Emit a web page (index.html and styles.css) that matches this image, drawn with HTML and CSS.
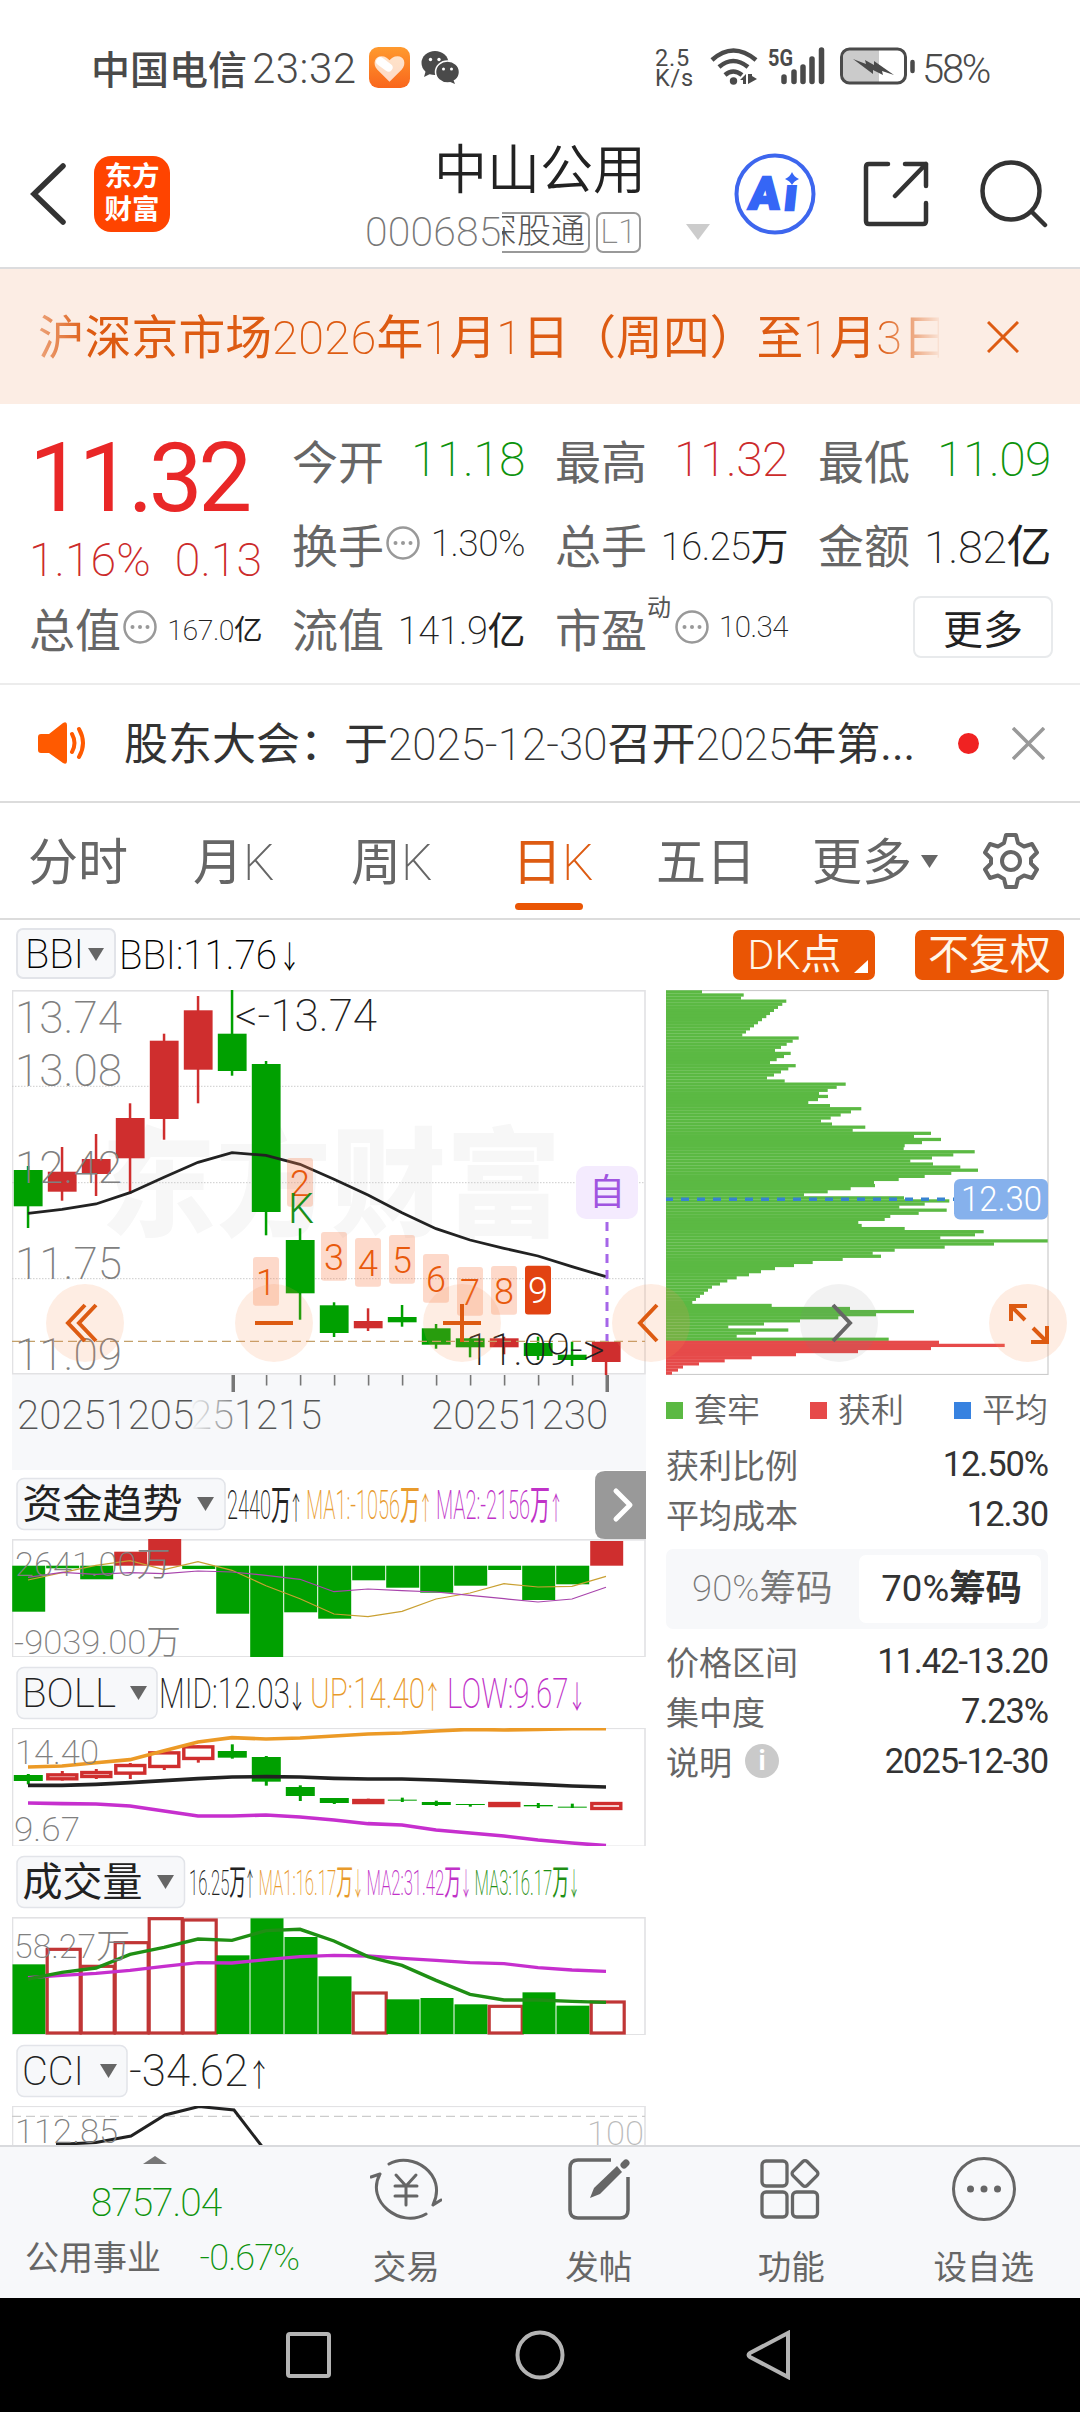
FILE: index.html
```html
<!DOCTYPE html>
<html lang="zh-CN">
<head>
    <meta charset="UTF-8">
    <meta name="viewport" content="width=device-width, initial-scale=1.0">
    <title>中山公用 000685</title>
    <link rel="stylesheet" href="styles.css">
</head>
<body>
    <div class="status-bar">
        <span class="carrier">中国电信</span>
        <span class="clock">23:32</span>
        <svg class="heart-app" viewBox="0 0 40 40">
            <defs>
                <linearGradient id="og" x1="0" y1="0" x2="0" y2="1"><stop offset="0" stop-color="#ff9a2e"/><stop offset="1" stop-color="#f9661c"/></linearGradient>
            </defs>
            <rect width="40" height="40" rx="9" fill="url(#og)"/>
            <path d="M20 34L8 22C3 16 6 9 12 9c4 0 6 2 8 4 2-2 4-4 8-4 6 0 9 7 4 13z" fill="#fff" opacity=".75"/>
            <path d="M11 14l8 6" stroke="#fff" stroke-width="8" stroke-linecap="round"/>
        </svg>
        <svg class="wechat" viewBox="0 0 38 33">
            <ellipse cx="14" cy="12" rx="13.5" ry="12" fill="#4a4a4a"/>
            <path d="M5 19l-2 7 8-4z" fill="#4a4a4a"/>
            <ellipse cx="26.500" cy="21" rx="12" ry="11" fill="#4a4a4a" stroke="#fff" stroke-width="1.500"/>
            <path d="M32 28l2 5-7-3z" fill="#4a4a4a"/>
            <g fill="#fff"><circle cx="9.500" cy="8.500" r="1.700"/><circle cx="18" cy="8.500" r="1.700"/><circle cx="22.500" cy="18" r="1.500"/><circle cx="30.500" cy="18" r="1.500"/></g>
        </svg>
        <div class="net-speed">2.5<br>K/s</div>
        <svg class="signals" viewBox="0 0 206 40">
            <g fill="none" stroke="#4a4a4a" stroke-width="4.500">
                <path d="M2 13Q23-6 46 13"/>
                <path d="M9 20Q23 8 38 20"/>
                <path d="M15 28Q23 21 32 28"/>
            </g>
            <circle cx="23.500" cy="34" r="3.700" fill="#4a4a4a"/>
            <path d="M30 33l6-6v10h-3v-4zM38 27v10l9-5-5-3v-2z" fill="#4a4a4a"/>
            <text x="58" y="18.500" class="five-g" textLength="25" lengthAdjust="spacingAndGlyphs">5G</text>
            <g stroke="#4a4a4a" stroke-width="5.500" stroke-linecap="round">
                <path d="M74 30v4.500M84 25v9.500M93 20v14.500M102 12v22.500M111.500 3v31.500"/>
            </g>
            <path d="M141 3h28v32h-28q-8 0-8-8V11q0-8 8-8z" fill="#cbcbcb"/>
            <rect x="131.500" y="2" width="64" height="34" rx="8" fill="none" stroke="#4a4a4a" stroke-width="3"/>
            <path d="M143 12l13 5-1-4 9 5v-4l20 14-12-4 1 4-10-5v4z" fill="#4a4a4a"/>
            <path d="M202.500 15v9" stroke="#4a4a4a" stroke-width="4.500" stroke-linecap="round"/>
        </svg>
        <span class="battery">58%</span>
    </div>

    <div class="header">
        <svg class="back" viewBox="0 0 36 62"><path d="M33 3L4 31l29 28" fill="none" stroke="#333" stroke-width="5.500" stroke-linecap="round"/></svg>
        <div class="app-logo">东方<br>财富</div>
        <div class="stock">
            <div class="stock-name">中山公用</div>
            <div class="stock-code">
                <span>000685</span>
                <span class="tag tag-clip"><i>深股通</i></span>
                <span class="tag tag-level">L1</span>
            </div>
        </div>
        <svg class="drop" viewBox="0 0 24 16"><path d="M0 0h24L12 16z" fill="#ccc"/></svg>
        <svg class="ai" viewBox="0 0 82 82">
            <circle cx="41" cy="41" r="38.500" fill="none" stroke="#3d66ee" stroke-width="4"/>
            <g transform="skewX(-6)">
                <text x="20" y="56" class="ai-text">A</text>
                <text x="55" y="57" class="ai-text">ı</text>
            </g>
            <path d="M58 19q2 5 7 7-5 2-7 6-2-4-7-6 5-2 7-7z" fill="#3566f6"/>
        </svg>
        <svg class="share" viewBox="0 0 66 66"><path d="M25 3H6q-3 0-3 3v54q0 3 3 3h54q3 0 3-3V42M42 3h21v22M63 3L32 35" fill="none" stroke="#333" stroke-width="4.500" stroke-linecap="round" stroke-linejoin="round"/></svg>
        <svg class="search" viewBox="0 0 68 68"><circle cx="31" cy="31" r="28.500" fill="none" stroke="#333" stroke-width="4.500"/><path d="M52 52l13 13" stroke="#333" stroke-width="4.500" stroke-linecap="round"/></svg>
    </div>

    <div class="banner">
        <div class="banner-text">沪深京市场<s>2026</s>年<s>1</s>月<s>1</s>日（周四）至<s>1</s>月<s>3</s>日</div>
        <svg class="banner-close" viewBox="0 0 32 32"><path d="M1 1l30 30M31 1L1 31" stroke="#dd5b12" stroke-width="3"/></svg>
    </div>

    <div class="quote">
        <div class="cell price-cell">
            <div class="price">11.32</div>
            <div class="change"><span>1.16%</span><span>0.13</span></div>
        </div>
        <div class="cell"><label>今开</label><b class="down">11.18</b></div>
        <div class="cell"><label>最高</label><b class="up">11.32</b></div>
        <div class="cell"><label>最低</label><b class="down">11.09</b></div>
        <div class="cell"><label>换手</label><svg class="dots" viewBox="0 0 34 34"><use href="#dots"/></svg><b class="s37">1.30%</b></div>
        <div class="cell"><label>总手</label><b class="s38">16.25<u>万</u></b></div>
        <div class="cell"><label>金额</label><b class="s45">1.82<u>亿</u></b></div>
        <div class="cell"><label>总值</label><svg class="dots" viewBox="0 0 34 34"><use href="#dots"/></svg><b class="s29">167.0<u>亿</u></b></div>
        <div class="cell"><label>流值</label><b class="s38">141.9<u>亿</u></b></div>
        <div class="cell"><label>市盈</label><sup>动</sup><svg class="dots" viewBox="0 0 34 34"><use href="#dots"/></svg><b class="s30">10.34</b></div>
        <div class="cell more-cell"><button class="more-btn">更多</button></div>
    </div>

    <div class="news">
        <svg class="speaker" viewBox="0 0 50 42">
            <path d="M3 12h8L25 1q4-2 4 2v36q0 4-4 2L11 31H3q-3 0-3-3V15q0-3 3-3z" fill="#ff5a00"/>
            <path d="M34 12q5 9 0 18M41 7q8 14 0 28" fill="none" stroke="#ff5a00" stroke-width="4" stroke-linecap="round"/>
        </svg>
        <span class="news-text">股东大会：于<s>2025-12-30</s>召开<s>2025</s>年第...</span>
        <i class="red-dot"></i>
        <svg class="news-close" viewBox="0 0 33 33"><path d="M1 1l31 31M32 1L1 32" stroke="#999" stroke-width="3.500"/></svg>
    </div>

    <div class="tabs">
        <div class="tab">分时</div>
        <div class="tab">月<s>K</s></div>
        <div class="tab">周<s>K</s></div>
        <div class="tab active">日<s>K</s></div>
        <div class="tab">五日</div>
        <div class="tab">更多<svg class="tab-arrow" viewBox="0 0 17 13"><path d="M0 0h17L8.500 13z" fill="#666"/></svg></div>
        <svg class="gear" viewBox="0 0 58 58">
            <path d="M24 3h10l2 8 6 3.500 8-2.500 5 8.500-6 6v5l6 6-5 8.500-8-2.500-6 3.500-2 8H24l-2-8-6-3.500-8 2.500-5-8.500 6-6v-5l-6-6 5-8.500 8 2.500 6-3.500z" fill="none" stroke="#666" stroke-width="4" stroke-linejoin="round"/>
            <circle cx="29" cy="29" r="9" fill="none" stroke="#666" stroke-width="4"/>
        </svg>
    </div>

    <div class="charts">
        <div class="chart-head">
            <div class="pill pill-bbi"><svg viewBox="12 928 104 51"><text x="25" y="968" font-size="41" textLength="59" lengthAdjust="spacingAndGlyphs">BBI</text><path d="M88 948h16l-8 13z" fill="#666"/></svg></div>
            <svg class="bbi-value" viewBox="118 928 200 51">
                <text x="119" y="968.500" font-size="41" textLength="158" lengthAdjust="spacingAndGlyphs">BBI:11.76</text>
                <text class="arw" x="289.500" y="968" textLength="22" lengthAdjust="spacingAndGlyphs">↓</text>
            </svg>
            <span class="btn dk"><s>DK</s>点<i></i></span>
            <span class="btn">不复权</span>
        </div>
        <div class="chart-body">
            <div class="left">
                <svg id="kline" class="h385" viewBox="12 990 634 385"></svg>
                <svg id="axis" class="h95" viewBox="12 1375 634 95"></svg>
                <div class="ind-row h69">
                    <svg viewBox="12 1470 634 69">
                        <rect class="pill-box" x="17" y="1478.500" width="208" height="51" rx="7"/>
                        <text class="cjk" x="22.500" y="1518" font-size="40" textLength="160" lengthAdjust="spacingAndGlyphs" fill="#222">资金趋势</text>
                        <path d="M197 1497h17l-8.500 14z" fill="#666"/>
                        <g font-size="40" id="fund-legend"></g>
                        <path d="M646 1471h-41q-10 0-10 10v48q0 10 10 10h41z" fill="#999"/>
                        <path d="M616 1491l14 14-14 14" fill="none" stroke="#fff" stroke-width="5" stroke-linecap="round" stroke-linejoin="round"/>
                    </svg>
                </div>
                <svg id="fund" class="h118" viewBox="12 1539 634 118"></svg>
                <div class="ind-row h71">
                    <svg viewBox="12 1657 634 71">
                        <rect class="pill-box" x="17" y="1667.500" width="140" height="51" rx="7"/>
                        <text x="22" y="1706.500" font-size="41" textLength="94" lengthAdjust="spacingAndGlyphs" fill="#222">BOLL</text>
                        <path d="M130 1686h17l-8.500 14z" fill="#666"/>
                        <g font-size="43" id="boll-legend"></g>
                    </svg>
                </div>
                <svg id="boll" class="h118" viewBox="12 1728 634 118"></svg>
                <div class="ind-row h71">
                    <svg viewBox="12 1846 634 71">
                        <rect class="pill-box" x="17" y="1856.500" width="167.500" height="51" rx="7"/>
                        <text class="cjk" x="22.500" y="1896" font-size="40" textLength="120" lengthAdjust="spacingAndGlyphs" fill="#222">成交量</text>
                        <path d="M157 1875h17l-8.500 14z" fill="#666"/>
                        <g font-size="35" id="volume-legend"></g>
                    </svg>
                </div>
                <svg id="volume" class="h118" viewBox="12 1917 634 118"></svg>
                <div class="ind-row h71">
                    <svg viewBox="12 2035 634 71">
                        <rect class="pill-box" x="17" y="2045.500" width="110" height="51" rx="7"/>
                        <text x="22" y="2084.500" font-size="41" textLength="62" lengthAdjust="spacingAndGlyphs" fill="#222">CCI</text>
                        <path d="M100 2064h17l-8.500 14z" fill="#666"/>
                        <g font-size="44" id="cci-legend"></g>
                    </svg>
                </div>
                <svg id="cci" class="h39" viewBox="12 2106 634 39"></svg>
            </div>
            <div class="right">
                <svg id="chips" class="h385" viewBox="666 990 383 385"></svg>
                <div class="legend">
                    <span><i class="sq green"></i>套牢</span>
                    <span><i class="sq red"></i>获利</span>
                    <span><i class="sq blue"></i>平均</span>
                </div>
                <div class="stat"><label>获利比例</label><span>12.50%</span></div>
                <div class="stat"><label>平均成本</label><span>12.30</span></div>
                <div class="toggle">
                    <div class="opt"><s>90%</s>筹码</div>
                    <div class="opt on"><s>70%</s>筹码</div>
                </div>
                <div class="stat"><label>价格区间</label><span>11.42-13.20</span></div>
                <div class="stat"><label>集中度</label><span>7.23%</span></div>
                <div class="stat"><label>说明<i class="info">i</i></label><span>2025-12-30</span></div>
            </div>
            <!-- 图表上的悬浮操作按钮 -->
            <div class="float-tools">
                <svg viewBox="0 0 78 78"><path d="M39 21L22 39l17 18M50 21L33 39l17 18"/></svg>
                <svg viewBox="0 0 78 78"><path d="M20 39h38"/></svg>
                <svg viewBox="0 0 78 78"><path d="M20 39h38M39 20v38"/></svg>
                <svg viewBox="0 0 78 78"><path d="M45 21L28 39l17 18"/></svg>
                <svg class="grey" viewBox="0 0 78 78"><path d="M33 21l17 18-17 18"/></svg>
                <svg viewBox="0 0 78 78"><path d="M22 37V22h16M23 23l13 13M58 42v16H42M57 57L44 44"/></svg>
            </div>
        </div>
    </div>

    <div class="bottom-bar">
        <div class="index">
            <svg class="up-arrow" viewBox="0 0 24 8"><path d="M0 8L12 0l12 8z" fill="#777"/></svg>
            <div class="index-value">8757.04</div>
            <div class="index-name"><span>公用事业</span><em>-0.67%</em></div>
        </div>
        <div class="action">
            <svg viewBox="0 0 72 66">
                <g fill="none" stroke="#666" stroke-width="3" stroke-linecap="round" stroke-linejoin="round">
                    <path d="M19 8C42-5 78 18 63 49M63 49l8-5M56 58C30 73-5 45 10 18M10 18l-9 3"/>
                    <path d="M26 19l10 11 10-11M25 30h22M25 40h22M36 30v19"/>
                </g>
            </svg>
            <span>交易</span>
        </div>
        <div class="action">
            <svg viewBox="0 0 72 66">
                <path d="M48 4H15q-8 0-8 8v42q0 8 8 8h42q8 0 8-8V21" fill="none" stroke="#666" stroke-width="3.500"/>
                <path d="M27 42l4-10 23-22 5 6-22 22z" fill="#666"/><path d="M61 9l2-2" stroke="#666" stroke-width="7" stroke-linecap="round"/>
            </svg>
            <span>发帖</span>
        </div>
        <div class="action">
            <svg viewBox="0 0 72 66">
                <g fill="none" stroke="#666" stroke-width="3.300">
                    <rect x="7" y="5" width="25" height="25" rx="4"/><rect x="7" y="36" width="25" height="25" rx="4"/><rect x="37.500" y="36" width="25" height="25" rx="4"/>
                    <rect x="40" y="7.500" width="20" height="20" rx="3" transform="rotate(45 50 17.500)"/>
                </g>
            </svg>
            <span>功能</span>
        </div>
        <div class="action">
            <svg viewBox="0 0 72 66"><circle cx="36" cy="33" r="30.500" fill="none" stroke="#666" stroke-width="3"/><g fill="#666"><circle cx="22.500" cy="33" r="3.500"/><circle cx="36" cy="33" r="3.500"/><circle cx="49.500" cy="33" r="3.500"/></g></svg>
            <span>设自选</span>
        </div>
    </div>

    <div class="nav-bar">
        <svg viewBox="0 0 50 50"><rect x="4" y="4" width="41" height="42" rx="2"/></svg>
        <svg viewBox="0 0 50 50"><circle cx="25" cy="25" r="22.500"/></svg>
        <svg viewBox="0 0 50 50"><path d="M42 3v44L4 27q-3-2 0-4z"/></svg>
    </div>

    <svg width="0" height="0" class="defs">
        <symbol id="dots" viewBox="0 0 34 34">
            <circle cx="17" cy="17" r="15.500" fill="none" stroke="#999" stroke-width="2.500"/>
            <g fill="#999"><circle cx="9.500" cy="17" r="2"/><circle cx="17" cy="17" r="2"/><circle cx="24.500" cy="17" r="2"/></g>
        </symbol>
    </svg>

    <script src="charts.js"></script>
</body>
</html>
```

FILE: styles.css
```css
* {
    margin: 0;
    padding: 0;
    box-sizing: border-box;
}

body {
    width: 1080px;
    height: 2412px;
    overflow: hidden;
    display: flex;
    flex-direction: column;
    background-color: #fff;
    color: #222;
    font-family: Roboto, "Noto Sans CJK SC", sans-serif;
    font-weight: 400;
    white-space: nowrap;
}

svg {
    display: block;
    flex: none;
}

i, em {
    font-style: normal;
}

/* s: 细体数字  u: 数字后的单位 */
s {
    text-decoration: none;
    font-weight: 200;
}

u {
    text-decoration: none;
    font-weight: 400;
}

svg text {
    font-weight: 200;
}

svg .cjk {
    font-weight: 400;
}

.arw {
    font-size: 31px;
    text-anchor: middle;
}

.defs {
    position: absolute;
}

/* 状态栏 */
.status-bar {
    height: 120px;
    padding: 14px 0 0 91px;
    display: flex;
    align-items: center;
    color: #4a4a4a;
}

.carrier {
    width: 161px;
    font-size: 39px;
    font-weight: 500;
}

.clock {
    width: 117px;
    font-size: 42px;
    font-weight: 300;
    padding-top: 3px;
    letter-spacing: 0.5px;
}

.heart-app {
    width: 41px;
    height: 41px;
}

.wechat {
    width: 38px;
    height: 33px;
    margin-left: 11px;
}

.net-speed {
    width: 57px;
    margin-left: 196px;
    padding-top: 2px;
    font-size: 23.5px;
    line-height: 20px;
    letter-spacing: 0.8px;
}

.signals {
    width: 206px;
    height: 40px;
    margin-left: -2px;
}

svg .five-g {
    font-size: 24px;
    font-weight: 700;
    fill: #4a4a4a;
}

.battery {
    font-size: 40px;
    font-weight: 300;
    padding-top: 4px;
    margin-left: 6px;
    letter-spacing: -2.3px;
}

/* 标题 */
.header {
    height: 149px;
    display: flex;
    align-items: center;
    padding-left: 30px;
    border-bottom: 2px solid #dcdcde;
}

.back {
    width: 36px;
    height: 62px;
}

.app-logo {
    width: 76px;
    height: 76px;
    margin-left: 28px;
    padding-top: 4px;
    border-radius: 17px;
    background-color: #ff4400;
    color: #fff;
    font-size: 27.5px;
    font-weight: 700;
    line-height: 33px;
    text-align: center;
}

.stock {
    width: 278px;
    margin-left: 195px;
    align-self: flex-start;
    padding-top: 16px;
}

.stock-name {
    text-align: right;
    font-size: 53px;
    font-weight: 350;
    line-height: 70px;
    margin-right: -3px;
}

.stock-code {
    display: flex;
    align-items: center;
    height: 50px;
    margin-top: 1px;
    color: #777;
    font-size: 41px;
    font-weight: 200;
}

.stock-code > span:first-child {
    width: 137px;
    letter-spacing: 0.2px;
}

.tag {
    height: 41px;
    line-height: 35px;
    border: 2px solid #999;
    border-radius: 7px;
    font-size: 34px;
}

.tag-clip {
    width: 88px;
    overflow: hidden;
    display: flex;
    justify-content: flex-end;
    padding-right: 3px;
    border-left: none;
    border-radius: 0 7px 7px 0;
    color: #555;
    font-weight: 300;
}

.tag-level {
    width: 45px;
    margin-left: 6px;
    text-align: center;
    color: #888;
}

.drop {
    width: 24px;
    height: 16px;
    margin: 77px 0 0 43px;
}

.ai {
    width: 82px;
    height: 82px;
    margin-left: 24px;
}

svg .ai-text {
    font-size: 45px;
    font-weight: 900;
    fill: #3566f6;
    stroke: #3566f6;
    stroke-width: 2.5;
}

.share {
    width: 66px;
    height: 66px;
    margin-left: 47px;
}

.search {
    width: 68px;
    height: 68px;
    margin-left: 51px;
}

/* 公告 */
.banner {
    height: 135px;
    padding-left: 38px;
    display: flex;
    align-items: center;
    background-color: #fcede4;
}

.banner-text {
    width: 901px;
    overflow: hidden;
    padding-bottom: 6px;
    font-size: 46.8px;
    color: #dd5b12;
    -webkit-mask-image: linear-gradient(90deg, rgba(0,0,0,0.5), #000 50px, #000 840px, transparent 906px);
    mask-image: linear-gradient(90deg, rgba(0,0,0,0.5), #000 50px, #000 840px, transparent 906px);
}

.banner-text s {
    letter-spacing: 0.4px;
}

.banner-close {
    width: 32px;
    height: 32px;
    margin-left: 48px;
}

/* 行情 */
.quote {
    height: 281px;
    padding: 13px 29px 0 29px;
    display: grid;
    grid-template-columns: repeat(4, 233px);
    grid-template-rows: repeat(3, 84px);
    column-gap: 30px;
    border-bottom: 2px solid #ececec;
}

.cell {
    display: flex;
    align-items: center;
}

.cell label {
    font-size: 46px;
    color: #666;
}

.cell b {
    flex: 1;
    text-align: right;
    font-weight: 200;
    font-size: 48px;
    letter-spacing: -0.5px;
}

.cell sup {
    font-size: 24px;
    color: #555;
    margin-top: -44px;
    margin-right: 2px;
}

.cell .s45 { font-size: 45px; }
.cell .s38 { font-size: 38px; }
.cell .s37 { font-size: 37px; }
.cell .s30 { font-size: 29.5px; }
.cell .s29 { font-size: 28.5px; }

.down { color: #0d930d; }
.up { color: #cc2b2b; }

.dots {
    width: 34px;
    height: 34px;
    margin-left: 2px;
}

.price-cell {
    grid-row: 1 / 3;
    flex-direction: column;
    align-items: flex-start;
}

.price {
    font-size: 96px;
    line-height: 112px;
    margin-top: 5px;
    letter-spacing: -4.5px;
    color: #e92727;
}

.change {
    width: 233px;
    display: flex;
    justify-content: space-between;
    line-height: 52px;
    font-size: 46.5px;
    font-weight: 200;
    color: #cc2b2b;
}

.more-cell {
    justify-content: flex-end;
}

.more-btn {
    width: 140px;
    height: 62px;
    margin-right: -2px;
    padding-bottom: 4px;
    border: 2px solid #e8eaec;
    border-radius: 8px;
    background-color: #fff;
    color: #222;
    font: 400 40px Roboto, "Noto Sans CJK SC", sans-serif;
}

/* 资讯 */
.news {
    height: 118px;
    padding-left: 38px;
    display: flex;
    align-items: center;
    border-bottom: 2px solid #dcdcdc;
}

.speaker {
    width: 50px;
    height: 42px;
}

.news-text {
    width: 834px;
    margin-left: 36px;
    padding-bottom: 5px;
    font-size: 44px;
    color: #333;
}

.red-dot {
    width: 21px;
    height: 21px;
    border-radius: 50%;
    background-color: #f02222;
}

.news-close {
    width: 33px;
    height: 33px;
    margin-left: 33px;
}

/* 周期 */
.tabs {
    height: 117px;
    padding-left: 28px;
    display: grid;
    grid-template-columns: 165px 158px 161px 144px 156px 170px 58px;
    align-items: center;
    border-bottom: 2px solid #dcdcdc;
    font-size: 50px;
    color: #666;
}

.tab {
    height: 115px;
    line-height: 120px;
    position: relative;
}

.tab.active {
    color: #dd5b12;
}

.tab.active::after {
    content: '';
    position: absolute;
    left: 3px;
    bottom: 8px;
    width: 68px;
    height: 7px;
    border-radius: 4px;
    background-color: #ea5504;
}

.tab-arrow {
    display: inline-block;
    width: 17px;
    height: 13px;
    margin: 0 0 12px 9px;
}

.gear {
    width: 58px;
    height: 58px;
}

/* 图表 */
.charts {
    height: 1225px;
    overflow: hidden;
}

.chart-head {
    height: 70px;
    padding: 8px 0 0 16px;
    display: flex;
}

.pill {
    width: 100px;
    height: 51px;
    border: 2px solid #e2e4e9;
    border-radius: 7px;
    background-color: #f7f8fa;
}

.pill svg {
    width: 104px;
    height: 51px;
    margin: -2px 0 0 -6px;
}

.pill-box {
    fill: #f7f8fa;
    stroke: #e2e4e9;
    stroke-width: 1.5;
}

.bbi-value {
    width: 200px;
    height: 51px;
    margin-left: 2px;
}

.btn {
    width: 149px;
    height: 50px;
    margin: 2px 0 0 40px;
    border-radius: 7px;
    background-color: #ea5504;
    color: #fff6e8;
    font-size: 41px;
    line-height: 50px;
    text-align: center;
}

.btn s {
    font-weight: 300;
}

.dk {
    width: 142px;
    margin-left: 415px;
    padding-right: 19px;
    position: relative;
}

.dk i {
    position: absolute;
    right: 7px;
    bottom: 7px;
    border-left: 14px solid transparent;
    border-bottom: 13px solid #fff;
}

.chart-body {
    display: flex;
    padding-left: 12px;
    position: relative;
}

.left {
    width: 634px;
}

.left > svg,
.ind-row svg {
    width: 634px;
    height: 100%;
}

.left .h385, .right .h385 { height: 385px; }
.left .h118 { height: 118px; }
.left .h95 { height: 95px; }
.left .h71 { height: 71px; }
.left .h69 { height: 69px; }
.left .h39 { height: 39px; }

.right {
    width: 383px;
    margin-left: 20px;
}

.right > svg {
    width: 383px;
}

.float-tools {
    position: absolute;
    left: 46px;
    top: 294px;
    width: 1021px;
    display: flex;
    justify-content: space-between;
}

.float-tools svg {
    width: 78px;
    height: 78px;
    border-radius: 50%;
    background-color: rgba(250, 140, 80, 0.16);
    fill: none;
    stroke: #dd5b12;
    stroke-width: 4;
}

.float-tools .grey {
    background-color: rgba(130, 130, 130, 0.1);
    stroke: #666;
}

.legend {
    height: 64px;
    margin-right: 1px;
    padding-top: 2px;
    display: flex;
    justify-content: space-between;
    align-items: center;
    font-size: 33px;
    font-weight: 350;
    color: #666;
}

.legend span {
    display: flex;
    align-items: center;
}

.sq {
    width: 17px;
    height: 17px;
    margin-right: 11px;
    margin-top: 4px;
}

.green { background-color: #5bb943; }
.red { background-color: #e64a4a; }
.blue { background-color: #3782e0; }

.stat {
    height: 50px;
    margin-right: 1px;
    display: flex;
    justify-content: space-between;
    align-items: center;
    font-size: 33px;
    color: #333;
}

.stat label {
    display: flex;
    align-items: center;
    color: #666;
}

.stat span {
    font-size: 34.5px;
    letter-spacing: -1.1px;
}

.info {
    width: 34px;
    height: 34px;
    margin-left: 13px;
    border-radius: 50%;
    background-color: #cacaca;
    color: #fff;
    font-size: 27px;
    font-weight: 700;
    line-height: 34px;
    text-align: center;
}

.toggle {
    width: 382px;
    height: 80px;
    margin: 10px 0 7px;
    padding: 6px 7px;
    display: flex;
    border-radius: 7px;
    background-color: #f7f8fa;
    font-size: 36.5px;
    line-height: 68px;
    text-align: center;
}

.opt {
    flex: 1;
    padding-right: 7px;
    color: #777;
}

.opt.on {
    padding-right: 0;
    padding-left: 4px;
    border-radius: 7px;
    background-color: #fff;
    color: #333;
    font-weight: 700;
}

.opt.on s {
    font-weight: 400;
}

/* 底部 */
.bottom-bar {
    height: 153px;
    display: flex;
    border-top: 2px solid #d9dadd;
    background-color: #f7f8fa;
    color: #666;
}

.index {
    width: 310px;
    padding-top: 9px;
}

.up-arrow {
    width: 24px;
    height: 8px;
    margin-left: 143px;
}

.index-value {
    margin-top: 16px;
    padding-left: 2px;
    text-align: center;
    font-size: 39px;
    font-weight: 200;
    line-height: 46px;
    color: #0d930d;
    letter-spacing: -1px;
}

.index-name {
    padding: 0 11px 0 25px;
    margin-top: 8px;
    display: flex;
    justify-content: space-between;
    align-items: center;
    font-size: 34px;
    line-height: 48px;
}

.index-name em {
    font-size: 36px;
    font-weight: 200;
    color: #0d930d;
    letter-spacing: -0.9px;
}

.action {
    flex: 1;
    padding-top: 9px;
    display: flex;
    flex-direction: column;
    align-items: center;
    font-size: 33.5px;
}

.action svg {
    width: 72px;
    height: 66px;
}

.action span {
    margin-top: 21px;
    line-height: 50px;
}

.nav-bar {
    height: 114px;
    padding: 0 284px;
    display: flex;
    justify-content: space-between;
    align-items: center;
    background-color: #000;
}

.nav-bar svg {
    width: 50px;
    height: 50px;
    fill: none;
    stroke: #b4b4b4;
    stroke-width: 4;
}
```

FILE: charts.js
```js
const RED = '#cf2e2e';
const GREEN = '#00a000';
const ORANGE = '#e89a2b';
const PURPLE = '#c032c8';
const DARK = '#222';
const cx = i => 28 + 34 * i;

function rect(x, y, w, h, attrs) {
    return `<rect x="${x}" y="${y}" width="${w}" height="${h}" ${attrs || ''}/>`;
}

function line(x1, y1, x2, y2, attrs) {
    return `<line x1="${x1}" y1="${y1}" x2="${x2}" y2="${y2}" ${attrs || ''}/>`;
}

function curve(ys, color, width) {
    const pts = ys.map((y, i) => cx(i) + ',' + y).join(' ');
    return `<polyline points="${pts}" fill="none" stroke="${color}" stroke-width="${width}"/>`;
}

function text(x, y, size, len, color, str, attrs) {
    return `<text x="${x}" y="${y}" font-size="${size}" textLength="${len}" lengthAdjust="spacingAndGlyphs" fill="${color}" ${attrs || ''}>${str}</text>`;
}

function frame(top, height) {
    return rect(12.5, top + 0.8, 632.5, height, 'fill="none" stroke="#e2e2e4" stroke-width="1.6"');
}

// 指标数值: [x, 结束x, 颜色, 文本, 箭头, 箭头中心x]
function drawLegend(id, y, arrowWidth, items) {
    document.getElementById(id).innerHTML = items.map(t => {
        const str = t[3].replace('万', '<tspan style="font-weight:400">万</tspan>');
        return `<text x="${t[0]}" y="${y}" textLength="${t[1] - t[0]}" lengthAdjust="spacingAndGlyphs" fill="${t[2]}">${str}</text>` +
            `<text class="arw" x="${t[5]}" y="${y}" textLength="${arrowWidth}" lengthAdjust="spacingAndGlyphs" fill="${t[2]}">${t[4]}</text>`;
    }).join('');
}

// K线: [颜色, 实体上沿, 实体下沿, 最高, 最低]
const candles = [
    ['g', 1170, 1206.3, 1166, 1228], ['r', 1171.7, 1191.7, 1147, 1200.7], ['r', 1159, 1174, 1134, 1196],
    ['r', 1118, 1158.3, 1103.3, 1194], ['r', 1040.7, 1119, 1033.7, 1139.7], ['r', 1010.3, 1069.7, 996, 1103.3],
    ['g', 1033.7, 1071, 990, 1075.7], ['g', 1064, 1212, 1061, 1235.3], ['g', 1240, 1293.3, 1228.3, 1319.7],
    ['g', 1305.3, 1333, 1302.3, 1337], ['r', 1321, 1328.3, 1308.3, 1331], ['g', 1317, 1322.3, 1305, 1326.7],
    ['g', 1328.3, 1344.7, 1324, 1348.7], ['g', 1338.3, 1347.3, 1338, 1357.3], ['r', 1338.3, 1347.3, 1336.7, 1354.3],
    ['g', 1343, 1356, 1336.7, 1360], ['g', 1354.7, 1360, 1341.7, 1366], ['r', 1341.7, 1362, 1341.7, 1375]
];
const bbi = [1213.3, 1209.3, 1204, 1192.7, 1177.3, 1162.3, 1152.7, 1155.3, 1164.3, 1179.3, 1195, 1212.7, 1228.7, 1240, 1248.3, 1256, 1266.7, 1276.7];
const tags = [[7, 1257], [8, 1158], [9, 1232], [10, 1238], [11, 1235], [12, 1254], [13, 1267], [14, 1266], [15, 1265.7]];

function drawKline() {
    let s = text(101, 1227, 118, 460, '#f7f7f7', '东方财富', 'style="font-weight:900"');
    s += frame(990, 383);
    [1086.3, 1182.7, 1278.7].forEach(y => {
        s += line(12, y, 645, y, 'stroke="#ccc" stroke-width="1" stroke-dasharray="1.500 1.500"');
    });
    candles.forEach((c, i) => {
        const color = c[0] === 'r' ? RED : GREEN;
        s += rect(cx(i) - 1.2, c[3], 2.5, c[4] - c[3], `fill="${color}"`);
        s += rect(cx(i) - 14.2, c[1], 28.8, c[2] - c[1], `fill="${color}"`);
    });
    s += curve(bbi, DARK, 2.8);
    s += line(12, 1341.3, 645, 1341.3, 'stroke="#c3a06a" stroke-width="1.300" stroke-dasharray="9 5"');
    [['13.74', 1032.7], ['13.08', 1085.7], ['12.42', 1182.7], ['11.75', 1278.7], ['11.09', 1370.3]].forEach(l => {
        s += text(15, l[1], 43.5, 107, '#808080', l[0]);
    });
    tags.forEach((t, n) => {
        const last = n === 8;
        s += rect(cx(t[0]) - 13, t[1], 26, 48.7, `rx="3" fill="${last ? '#e24312' : 'rgba(250,130,80,0.3)'}"`);
        s += `<text x="${cx(t[0])}" y="${t[1] + 37.5}" font-size="36" text-anchor="middle" style="font-weight:300" fill="${last ? '#fff' : '#e8590c'}">${n + 1}</text>`;
    });
    s += text(288, 1222.7, 42, 26, '#1a8f1a', 'K', 'style="font-weight:300"');
    s += text(235, 1031, 43.5, 142, DARK, '&lt;-13.74');
    s += text(466, 1365, 43.5, 139, DARK, '11.09-&gt;');
    s += line(607, 1222, 607, 1341, 'stroke="#a566e8" stroke-width="3" stroke-dasharray="9 7"');
    s += rect(576, 1166, 62, 53, 'rx="10" fill="#f4ebfe"');
    s += text(589, 1205, 36, 36, '#a055e0', '自', 'class="cjk"');
    document.getElementById('kline').innerHTML = s;
}

function drawAxis() {
    let s = rect(12, 1375, 634, 95, 'fill="#f7f8fa"');
    s += '<defs><linearGradient id="fade" gradientUnits="userSpaceOnUse" x1="190" y1="0" x2="250" y2="0">' +
        '<stop offset="0" stop-color="#555" stop-opacity="0"/><stop offset="1" stop-color="#555"/></linearGradient></defs>';
    for (let i = 6; i < 18; i++) {
        const big = i === 6 || i === 17;
        s += rect(cx(i) - (big ? 0.5 : 0.2), 1375, big ? 3.5 : 1.6, big ? 17 : 10.5, 'fill="#777"');
    }
    s += text(17, 1428.7, 40, 177, '#555', '20251205');
    s += text(146, 1428.7, 40, 176, 'url(#fade)', '20251215');
    s += text(431, 1428.7, 40, 177, '#555', '20251230');
    document.getElementById('axis').innerHTML = s;
}

function drawFund() {
    const zero = 1565.7;
    const bars = [1611.7, 1568.3, 1579.3, 1551.7, 1539, 1569, 1613.7, 1657, 1612.3, 1618.7, 1580.3, 1587.7, 1592.7, 1585.7, 1570, 1600, 1584.3, 1541];
    const ma1 = [1580, 1572.7, 1565.3, 1560.7, 1569.7, 1561.7, 1570.3, 1585.7, 1598.7, 1614, 1616.7, 1611.3, 1599, 1593, 1583.7, 1587, 1586.3, 1576.3];
    const ma2 = [1577.3, 1572.3, 1574.3, 1572.7, 1573.7, 1571, 1572, 1575.3, 1579.3, 1591.7, 1589, 1590.7, 1592, 1595.3, 1598.7, 1602, 1599, 1587.3];
    let s = frame(1539, 117);
    bars.forEach((y, i) => {
        s += rect(cx(i) - 15.8, Math.min(y, zero), 33, Math.abs(y - zero), `fill="${y < zero ? RED : GREEN}"`);
    });
    s += curve(ma1, '#c9a032', 1.2) + curve(ma2, '#a844ac', 1.2);
    s += text(15, 1575.7, 34, 156, '#808080', '2641.00万');
    s += text(14, 1654, 34, 167, '#808080', '-9039.00万');
    document.getElementById('fund').innerHTML = s;
    drawLegend('fund-legend', 1518.5, 14, [
        [227, 291, DARK, '2440万', '↑', 296],
        [306, 420, ORANGE, 'MA1:-1056万', '↑', 425.5],
        [436, 550, PURPLE, 'MA2:-2156万', '↑', 556]
    ]);
}

function drawBoll() {
    const up = [951, 948, 938, 929, 902, 876, 863, 867, 864, 858, 852, 849, 843, 838, 840, 838, 836, 836];
    const mid = [1006, 1006, 1003, 998, 992, 986, 981, 980, 981, 985, 987, 987, 990, 994, 999, 1003, 1008, 1011];
    const low = [1059, 1061, 1062, 1068, 1083, 1098, 1098, 1095, 1101, 1110, 1121, 1125, 1140, 1149, 1158, 1170, 1179, 1187];
    const ks = [
        ['g', 975, 993, 972, 1003], ['r', 971, 990, 963, 992], ['r', 964, 983, 957, 987], ['r', 943, 973, 939, 987],
        ['r', 905, 953, 904, 960], ['r', 887, 929, 886, 938], ['g', 903, 923, 883, 926], ['g', 921, 995, 918, 1007],
        ['g', 1011, 1038, 1006, 1053], ['g', 1044, 1059, 1044, 1062], ['r', 1048, 1061, 1046, 1062], ['g', 1049, 1052, 1043, 1056],
        ['g', 1056, 1065, 1052, 1068], ['g', 1062, 1065, 1062, 1070], ['r', 1057, 1070, 1056, 1071], ['g', 1065, 1069, 1059, 1074],
        ['g', 1070, 1073, 1061, 1074], ['r', 1057, 1079, 1056, 1080]
    ];
    const y = v => 1450 + v / 3;
    let s = frame(1727.5, 118);
    ks.forEach((c, i) => {
        const color = c[0] === 'r' ? RED : GREEN;
        s += rect(cx(i) - 1.2, y(c[3]), 3, y(c[4]) - y(c[3]), `fill="${color}"`);
        if (c[0] === 'r') {
            s += rect(cx(i) - 14.2, y(c[1]) + 1.2, 29, Math.max(2, y(c[2]) - y(c[1]) - 2.4), `fill="#fff" stroke="${RED}" stroke-width="3.4"`);
        } else {
            s += rect(cx(i) - 14.2, y(c[1]), 29, y(c[2]) - y(c[1]), `fill="${GREEN}"`);
        }
    });
    s += curve(up.map(y), '#ec9a26', 3.6) + curve(mid.map(y), DARK, 3.6) + curve(low.map(y), '#c62fce', 3.6);
    s += text(15, 1764.3, 33, 84, '#808080', '14.40');
    s += text(14, 1841, 33, 66, '#808080', '9.67');
    document.getElementById('boll').innerHTML = s;
    drawLegend('boll-legend', 1707.5, 18, [
        [159, 290, DARK, 'MID:12.03', '↓', 297],
        [310, 425, ORANGE, 'UP:14.40', '↑', 432.5],
        [447, 568.5, PURPLE, 'LOW:9.67', '↓', 577]
    ]);
}

function drawVolume() {
    const vols = [
        ['g', 373], ['r', 325], ['r', 376], ['r', 305], ['r', 233], ['r', 237], ['g', 346], ['g', 235], ['g', 291],
        ['g', 409], ['r', 456], ['g', 478], ['g', 474], ['g', 493], ['r', 496], ['g', 457], ['g', 497], ['r', 483]
    ];
    const ma2 = [413, 406, 400, 391, 379, 368, 369, 359, 350, 346, 348, 355, 361, 368, 371, 383, 390, 394];
    const ma3 = [417, 397, 384, 343, 322, 297, 301, 272, 268, 303, 350, 376, 421, 463, 480, 480, 484, 487];
    const y = v => 1840 + v / 3;
    const base = 2034;
    let s = frame(1917, 117);
    vols.forEach((v, i) => {
        const top = y(v[1]);
        if (v[0] === 'r') {
            s += rect(cx(i) - 14.8, top + 1, 33, base - top - 2, 'fill="#fff" stroke="#c03636" stroke-width="3.200"');
        } else {
            s += rect(cx(i) - 15.5, top, 33, base - top, `fill="${GREEN}"`);
        }
    });
    s += curve(ma2.map(y), '#c62fce', 3.4) + curve(ma3.map(y), '#1f8f14', 3.4);
    s += text(14, 1957.7, 34, 116, '#808080', '58.27万');
    document.getElementById('volume').innerHTML = s;
    drawLegend('volume-legend', 1894.5, 11, [
        [189, 246, DARK, '16.25万', '↑', 250],
        [258.5, 353, ORANGE, 'MA1:16.17万', '↓', 358],
        [366.5, 461, PURPLE, 'MA2:31.42万', '↓', 466],
        [474.5, 569, '#1f8f14', 'MA3:16.17万', '↓', 574]
    ]);
}

function drawCci() {
    let s = frame(2105.5, 118);
    s += line(12, 2116.3, 645, 2116.3, 'stroke="#ccc" stroke-width="1.200" stroke-dasharray="9 5"');
    s += '<polyline points="56,2144.5 96,2142.500 131,2136 165,2115 199,2106.500 234,2110 264,2149" fill="none" stroke="#222" stroke-width="3"/>';
    s += text(15, 2142.7, 33, 103, '#808080', '112.85');
    s += text(587, 2144.7, 33, 57, '#bbb', '100');
    document.getElementById('cci').innerHTML = s;
    drawLegend('cci-legend', 2086, 24, [[129, 248, DARK, '-34.62', '↑', 259]]);
}

// 筹码分布，每行一个价位
const chips = [
    186, 311, 303, 439, 427, 414, 402, 390, 379, 366, 354, 342, 330, 318, 307, 476, 458, 440, 423, 405, 452, 432, 410, 390, 467,
    445, 423, 402, 381, 434, 617, 590, 563, 537, 564, 534, 505, 570, 664, 633, 602, 572, 543, 576, 676, 638, 873, 822, 903, 846,
    794, 791, 1004, 940, 876, 811, 879, 961, 1014, 934, 854, 776, 702, 705, 632, 563, 492, 792, 928, 854, 778, 920, 836, 751, 734,
    655, 665, 794, 1031, 1005, 901, 1223, 1062, 914, 764, 698, 723, 608, 518, 462, 405, 363, 327, 290, 262, 240, 216, 204, 192, 180,
    168, 157, 395, 630, 822, 708, 595, 480, 372, 265, 445, 348, 290, 746, 897, 1094, 873, 654, 468, 335, 254, 177, 129, 114, 96
];

function drawChips() {
    const h = 384.2 / chips.length;
    let s = rect(666.5, 990.5, 381.5, 384, 'fill="#fff" stroke="#ccc" stroke-width="1.200"');
    chips.forEach((v, i) => {
        s += rect(666, (990.3 + i * h).toFixed(2), ((v - 78) / 3).toFixed(1), (h + 0.2).toFixed(2), `fill="${i < 114 ? '#5bb943' : '#e64a4a'}"`);
    });
    s += line(666, 1199.3, 955, 1199.3, 'stroke="#3782d0" stroke-width="3.600" stroke-dasharray="8 8" stroke-dashoffset="1"');
    s += rect(954, 1179, 94, 40.5, 'rx="6" fill="#86b1ec"');
    s += text(961, 1211, 35.5, 81, '#fff', '12.30', 'style="font-weight:300"');
    document.getElementById('chips').innerHTML = s;
}

drawKline();
drawAxis();
drawFund();
drawBoll();
drawVolume();
drawCci();
drawChips();
```
